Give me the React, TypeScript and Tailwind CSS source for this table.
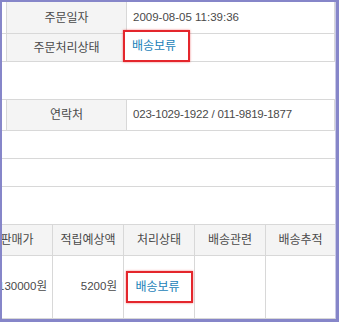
const font = { fontFamily: '"Liberation Sans", "Noto Sans CJK KR", sans-serif' };

function InfoRow({ label, children, h }: { label: string; children: React.ReactNode; h: string }) {
  return (
    <div className={`flex border-b border-[#d8d8d8] ${h}`}>
      <div className="w-[4px] shrink-0" />
      <div className="flex w-[121px] shrink-0 items-center justify-center border-x border-[#d8d8d8] bg-[#f4f4f4]">
        {label}
      </div>
      <div className="relative flex w-[208px] shrink-0 items-center border-r border-[#d8d8d8] pl-[6px]">
        {children}
      </div>
    </div>
  );
}

function HoldBadge({ className }: { className: string }) {
  return (
    <div
      className={`flex h-[32px] w-[67px] items-center border-2 border-[#e4262c] bg-white shadow-[0_0_2px_rgba(228,38,44,0.6)] ${className}`}
    >
      <span className="text-[#1a7fb8]">배송보류</span>
    </div>
  );
}

const heads = ["판매가", "적립예상액", "처리상태", "배송관련", "배송추적"];

export default function App() {
  return (
    <div
      className="h-[322px] w-[339px] overflow-hidden border-b-[3px] border-l-2 border-r-[3px] border-t-2 border-[#8686c9] bg-white text-[12px] text-[#4a4a4a]"
      style={font}
    >
      <div className="h-full overflow-hidden border-r border-[#c9c9e6]">
        <InfoRow label="주문일자" h="h-[32px]">
          <span className="text-[11.5px]">2009-08-05 11:39:36</span>
        </InfoRow>
        <InfoRow label="주문처리상태" h="h-[28px]">
          <HoldBadge className="absolute left-[-4px] top-[-4px] pl-[7px]" />
        </InfoRow>
        <div className="h-[38px] border-b border-[#d8d8d8]" />
        <InfoRow label="연락처" h="h-[31px]">
          <span className="text-[11.5px] tracking-[-0.2px]">023-1029-1922 / 011-9819-1877</span>
        </InfoRow>
        <div className="h-[28px] border-b border-[#d8d8d8]" />
        <div className="h-[28px] border-b border-[#d8d8d8]" />
        <div className="h-[38px] border-b border-[#d8d8d8]" />

        {/* 주문 상품 목록 */}
        <div className="ml-[-20px] flex h-[31px] w-[353px] border-b border-[#d8d8d8] bg-[#f4f4f4]">
          {heads.map((t, i) => (
            <div
              key={t}
              className={`flex items-center justify-center ${i < 4 ? "w-[71px] border-r border-[#d8d8d8]" : "flex-1"}`}
            >
              {t}
            </div>
          ))}
        </div>
        <div className="ml-[-20px] flex h-[63px] w-[353px] border-b border-[#d8d8d8] text-[11.5px]">
          <div className="flex w-[71px] items-center justify-end border-r border-[#d8d8d8] pr-[5px]">130000원</div>
          <div className="flex w-[71px] items-center justify-end border-r border-[#d8d8d8] pr-[6px]">5200원</div>
          <div className="flex w-[71px] items-center justify-center border-r border-[#d8d8d8] text-[12px]">
            <HoldBadge className="pl-[8px]" />
          </div>
          <div className="w-[71px] border-r border-[#d8d8d8]" />
          <div className="flex-1" />
        </div>
      </div>
    </div>
  );
}
